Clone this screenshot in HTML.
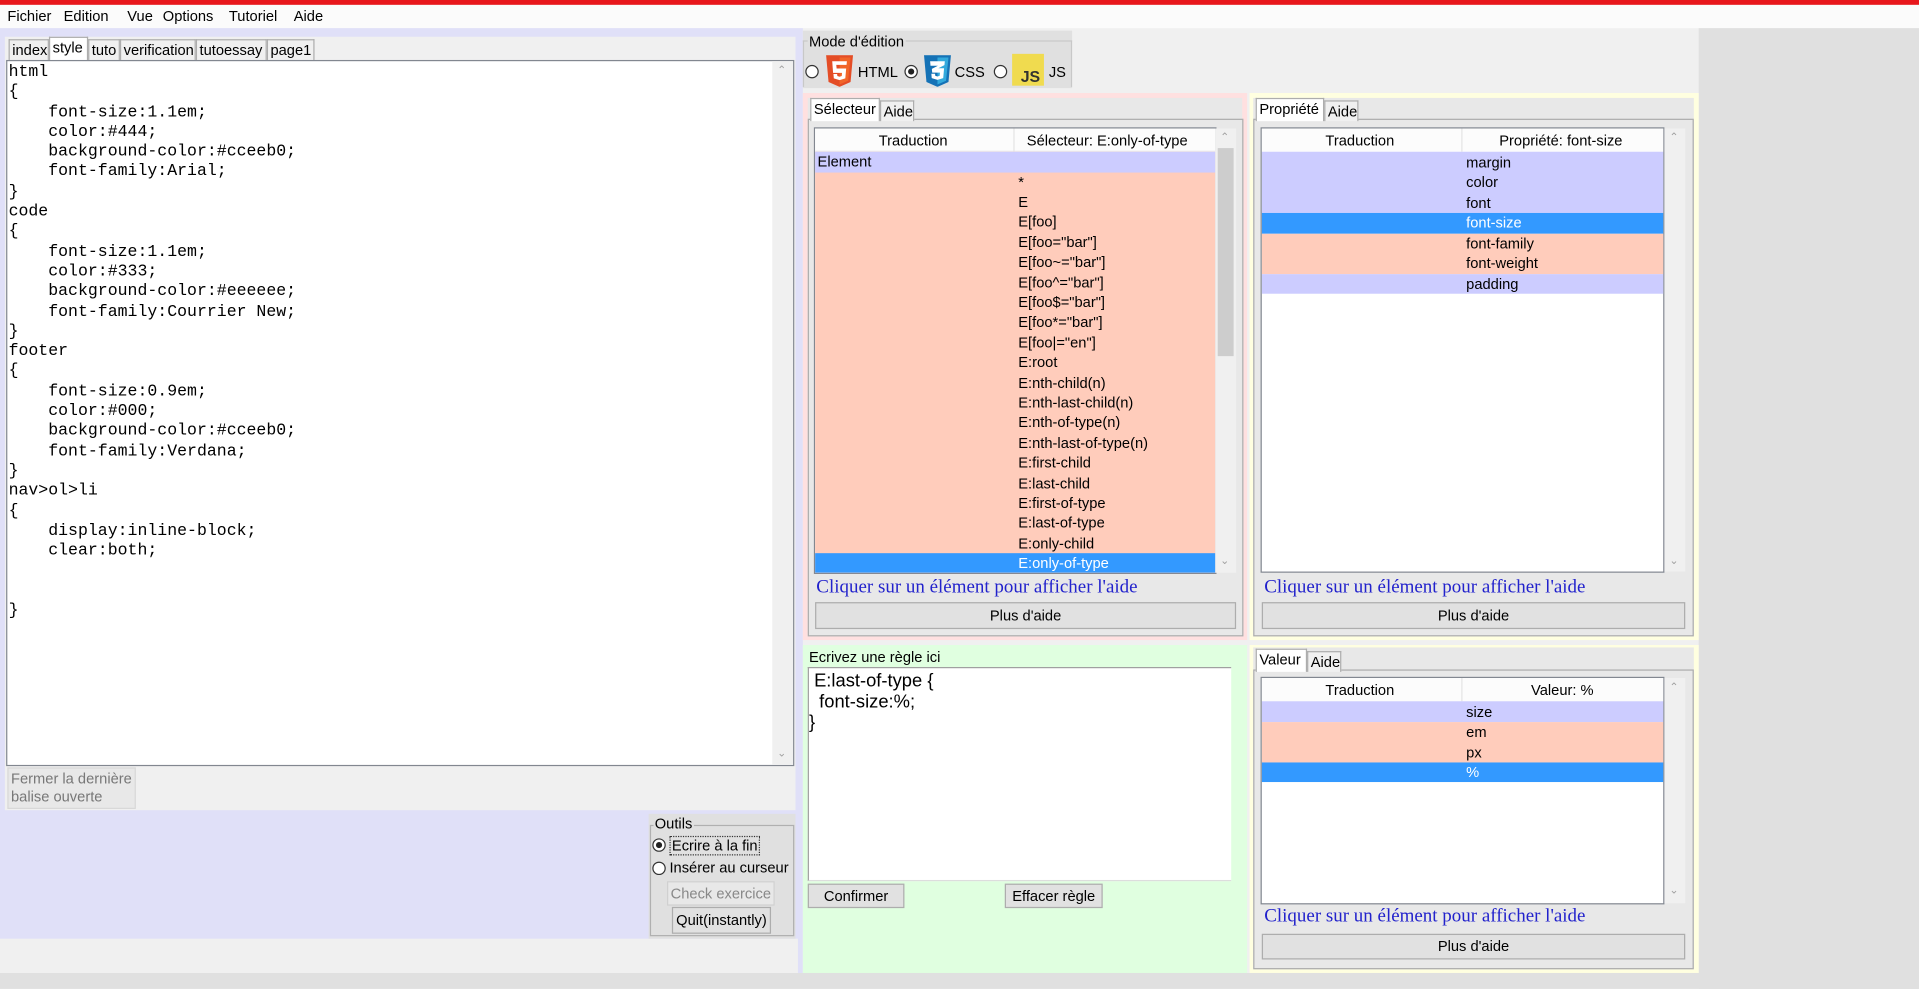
<!DOCTYPE html>
<html><head><meta charset="utf-8"><style>
*{box-sizing:border-box;margin:0;padding:0}
body{width:1919px;height:989px;overflow:hidden;background:#f0f0f0;font-family:"Liberation Sans",sans-serif}
#r{position:absolute;left:0;top:0;width:1568px;height:808px;transform:scale(1.22385);transform-origin:0 0;font-size:12px;color:#000;background:#f0f0f0}
.a{position:absolute}
.t{position:absolute;white-space:nowrap}
.tab{position:absolute;height:18px;border:1px solid #adadad;border-bottom:none;background:#f0f0f0;padding:1px 2px;font-size:12px}
.tab.on{background:#fff;height:20px;top:-2px}
.btn{position:absolute;border:1px solid #adadad;background:#e1e1e1;text-align:center;font-size:12px}
.tbl{position:absolute;background:#fff;border:1px solid #828790}
.row{position:absolute;left:0;height:16.5px;line-height:16px;font-size:12px}
.code{font-family:"Liberation Mono",monospace;font-size:13.5px;line-height:16.3px;white-space:pre;color:#000}
.help{position:absolute;font-family:"Liberation Serif",serif;font-size:15.5px;color:#2222cc;white-space:nowrap}
.radio{position:absolute;width:11px;height:11px;border:1px solid #333;border-radius:50%;background:#fff}
.radio.on::after{content:"";position:absolute;left:2px;top:2px;width:5px;height:5px;border-radius:50%;background:#222}
.sb{position:absolute;background:#f0f0f0}
.ar{position:absolute;color:#a0a0a0;font-size:9px}
</style></head><body><div id="r">
<div class="a" style="left:0;top:0;width:1568px;height:4px;background:#e8171c"></div>
<div class="a" style="left:0;top:4px;width:1568px;height:19px;background:#fbfbfb"></div>
<div class="t" style="left:6px;top:6px">Fichier</div>
<div class="t" style="left:52px;top:6px">Edition</div>
<div class="t" style="left:104px;top:6px">Vue</div>
<div class="t" style="left:133px;top:6px">Options</div>
<div class="t" style="left:187px;top:6px">Tutoriel</div>
<div class="t" style="left:240px;top:6px">Aide</div>
<div class="a" style="left:1388px;top:23px;width:180px;height:785px;background:#e0e0e0"></div>
<div class="a" style="left:0;top:795px;width:1568px;height:13px;background:#e0e0e0"></div>

<!-- left panel -->
<div class="a" style="left:0;top:23px;width:652px;height:744px;background:#e0e0f8"></div>
<div class="a" style="left:4px;top:30px;width:646px;height:632px;background:#f0f0f0"></div>
<div class="a" style="left:0;top:32px;height:20px">
<div class="tab" style="left:7px;width:33px">index</div>
<div class="tab on" style="left:40px;width:32px">style</div>
<div class="tab" style="left:72px;width:26px">tuto</div>
<div class="tab" style="left:98px;width:62px">verification</div>
<div class="tab" style="left:160px;width:58px">tutoessay</div>
<div class="tab" style="left:218px;width:39px">page1</div>
</div>
<div class="a" style="left:5px;top:49px;width:644px;height:577px;background:#fff;border:1px solid #828790"></div>
<div class="sb" style="left:631px;top:50px;width:17px;height:575px"></div>
<div class="ar" style="left:635px;top:52px">&#8963;</div>
<div class="ar" style="left:635px;top:610px">&#8964;</div>
<div class="a code" style="left:7px;top:52px">html
{
    font-size:1.1em;
    color:#444;
    background-color:#cceeb0;
    font-family:Arial;
}
code
{
    font-size:1.1em;
    color:#333;
    background-color:#eeeeee;
    font-family:Courrier New;
}
footer
{
    font-size:0.9em;
    color:#000;
    background-color:#cceeb0;
    font-family:Verdana;
}
nav&gt;ol&gt;li
{
    display:inline-block;
    clear:both;


}</div>
<div class="a" style="left:6px;top:627px;width:105px;height:34px;background:#e8e8e8;border:1px solid #d8d8d8;color:#777;font-size:12px;line-height:15px;padding:1px 2px">Fermer la dernière<br>balise ouverte</div>

<!-- outils -->
<div class="a" style="left:530px;top:665px;width:120px;height:102px;background:#e0e0e0"></div>
<div class="a" style="left:531px;top:674px;width:118px;height:91px;border:1px solid #b0b0b0"></div>
<div class="t" style="left:534px;top:666px;background:#e0e0e0;padding:0 1px">Outils</div>
<div class="radio on" style="left:533px;top:685px"></div>
<div class="t" style="left:547px;top:683px;border:1px dotted #333;padding:0 1px">Ecrire à la fin</div>
<div class="radio" style="left:533px;top:704px"></div>
<div class="t" style="left:547px;top:702px">Insérer au curseur</div>
<div class="btn" style="left:545px;top:720px;width:88px;height:20px;color:#888;background:#e8e8e8;border-color:#d0d0d0;line-height:18px">Check exercice</div>
<div class="btn" style="left:549px;top:741px;width:81px;height:22px;line-height:20px">Quit(instantly)</div>

<!-- mode d'edition -->
<div class="a" style="left:652px;top:23px;width:4px;height:772px;background:#e0e0f8"></div>
<div class="a" style="left:656px;top:25px;width:220px;height:47px;background:#e0e0e0"></div>
<div class="a" style="left:656px;top:33px;width:220px;height:38px;border:1px solid #c8c8c8;border-bottom:none"></div>
<div class="t" style="left:660px;top:27px;background:#e0e0e0;padding:0 1px">Mode d'édition</div>
<div class="radio" style="left:658px;top:53px"></div>
<svg class="a" style="left:674px;top:45px" width="24" height="26" viewBox="0 0 24 26"><path d="M1 0h22l-2 22-9 4-9-4z" fill="#e44d26"/><path d="M12 2v22l7-3 2-19z" fill="#f16529"/><path d="M6 5h12l-.3 3H9.3l.3 3h7.8l-.7 8-4.7 1.5-4.7-1.5-.3-3.5h3l.2 1.6 1.8.6 1.8-.6.2-2.6H6.7z" fill="#fff"/></svg>
<div class="t" style="left:701px;top:52px">HTML</div>
<div class="radio on" style="left:739px;top:53px"></div>
<svg class="a" style="left:754px;top:45px" width="24" height="26" viewBox="0 0 24 26"><path d="M1 0h22l-2 22-9 4-9-4z" fill="#1572b6"/><path d="M12 2v22l7-3 2-19z" fill="#33a9dc"/><path d="M6 5h12l-.3 3.2-5 2.6h4.7l-.7 8-4.7 1.5-4.7-1.5-.3-3.5h3l.2 1.6 1.8.6 1.8-.6.2-2.6H7.7l-.3-3 5-2.6H6.3z" fill="#fff"/></svg>
<div class="t" style="left:780px;top:52px">CSS</div>
<div class="radio" style="left:812px;top:53px"></div>
<div class="a" style="left:827px;top:44px;width:26px;height:26px;background:#f0db4f"></div>
<div class="t" style="left:834px;top:55px;font-weight:bold;font-size:13px;color:#323330">JS</div>
<div class="t" style="left:857px;top:52px">JS</div>

<!-- selecteur panel -->
<div class="a" style="left:656px;top:76px;width:363px;height:447px;background:#ffe0e0"></div>
<div class="a" style="left:660px;top:80px;width:355px;height:440px;background:#e8e8e8"></div>
<div class="a" style="left:660px;top:97px;width:356px;height:423px;border:1px solid #adadad;background:#e8e8e8"></div>
<div class="a" style="left:660px;top:80px;height:18px">
<div class="tab on" style="left:2px;top:0;width:57px;height:19px">Sélecteur</div>
<div class="tab" style="left:59px;top:2px;width:28px;height:17px">Aide</div>
</div>
<div class="tbl" style="left:665px;top:104px;width:329px;height:365px;overflow:hidden">
<div class="row" style="top:0;width:329px;height:19px;background:#fcfcfc;border-bottom:1px solid #eee"></div>
<div class="t" style="left:52px;top:3px">Traduction</div>
<div class="a" style="left:162px;top:0;width:1px;height:19px;background:#e5e5e5"></div>
<div class="t" style="left:173px;top:3px">Sélecteur: E:only-of-type</div>
<div class="a" style="left:0;top:19px;width:329px;height:345px;background:#ffccbb"></div>
<div class="row" style="top:19px;width:329px;background:#ccccff;padding-left:2px">Element</div>
<div class="row" style="top:346.5px;width:329px;background:#3399ff"></div>
<div class="a" style="left:166px;top:35.5px;line-height:16.4px;font-size:12px;white-space:pre">*
E
E[foo]
E[foo="bar"]
E[foo~="bar"]
E[foo^="bar"]
E[foo$="bar"]
E[foo*="bar"]
E[foo|="en"]
E:root
E:nth-child(n)
E:nth-last-child(n)
E:nth-of-type(n)
E:nth-last-of-type(n)
E:first-child
E:last-child
E:first-of-type
E:last-of-type
E:only-child
<span style="color:#fff">E:only-of-type</span></div>
</div>
<div class="sb" style="left:993px;top:105px;width:17px;height:363px"></div>
<div class="a" style="left:995px;top:121px;width:13px;height:170px;background:#cdcdcd"></div>
<div class="ar" style="left:997px;top:107px">&#8963;</div>
<div class="ar" style="left:997px;top:453px">&#8964;</div>
<div class="help" style="left:667px;top:471px">Cliquer sur un élément pour afficher l'aide</div>
<div class="btn" style="left:666px;top:492px;width:344px;height:22px;line-height:20px">Plus d'aide</div>

<!-- regle panel -->
<div class="a" style="left:656px;top:527px;width:363px;height:268px;background:#e0ffe0"></div>
<div class="t" style="left:661px;top:530px">Ecrivez une règle ici</div>
<div class="a" style="left:660px;top:545px;width:346px;height:175px;background:#fff;border:1px solid #a0a0a0;border-right:none;border-bottom-color:#ddd"></div>
<div class="a" style="left:661px;top:548px;font-size:15px;line-height:17px;white-space:pre"> E:last-of-type {
  font-size:%;
}</div>
<div class="btn" style="left:660px;top:722px;width:79px;height:20px;line-height:18px">Confirmer</div>
<div class="btn" style="left:821px;top:722px;width:80px;height:20px;line-height:18px">Effacer règle</div>

<!-- propriete panel -->
<div class="a" style="left:1021px;top:76px;width:367px;height:447px;background:#ffffe0"></div>
<div class="a" style="left:1024px;top:80px;width:360px;height:440px;background:#e8e8e8"></div>
<div class="a" style="left:1024px;top:97px;width:360px;height:423px;border:1px solid #adadad;background:#e8e8e8"></div>
<div class="a" style="left:1024px;top:80px;height:18px">
<div class="tab on" style="left:2px;top:0;width:56px;height:19px">Propriété</div>
<div class="tab" style="left:58px;top:2px;width:28px;height:17px">Aide</div>
</div>
<div class="tbl" style="left:1030px;top:104px;width:330px;height:364px;overflow:hidden">
<div class="row" style="top:0;width:330px;height:19px;background:#fcfcfc"></div>
<div class="t" style="left:52px;top:3px">Traduction</div>
<div class="a" style="left:163px;top:0;width:1px;height:19px;background:#e5e5e5"></div>
<div class="t" style="left:194px;top:3px">Propriété: font-size</div>
<div class="row" style="top:19px;width:330px;height:50px;background:#ccccff"></div>
<div class="row" style="top:69px;width:330px;background:#3399ff"></div>
<div class="row" style="top:85.5px;width:330px;height:33px;background:#ffccbb"></div>
<div class="row" style="top:118.5px;width:330px;background:#ccccff"></div>
<div class="a" style="left:167px;top:19.5px;line-height:16.6px;font-size:12px;white-space:pre">margin
color
font
<span style="color:#fff">font-size</span>
font-family
font-weight
padding</div>
</div>
<div class="sb" style="left:1360px;top:105px;width:17px;height:362px"></div>
<div class="ar" style="left:1364px;top:107px">&#8963;</div>
<div class="ar" style="left:1364px;top:453px">&#8964;</div>
<div class="help" style="left:1033px;top:471px">Cliquer sur un élément pour afficher l'aide</div>
<div class="btn" style="left:1031px;top:492px;width:346px;height:22px;line-height:20px">Plus d'aide</div>

<!-- valeur panel -->
<div class="a" style="left:1021px;top:527px;width:367px;height:268px;background:#ffffe0"></div>
<div class="a" style="left:1024px;top:529px;width:360px;height:263px;background:#e8e8e8"></div>
<div class="a" style="left:1024px;top:547px;width:360px;height:245px;border:1px solid #adadad;background:#e8e8e8"></div>
<div class="a" style="left:1024px;top:530px;height:18px">
<div class="tab on" style="left:2px;top:0;width:42px;height:19px">Valeur</div>
<div class="tab" style="left:44px;top:2px;width:28px;height:17px">Aide</div>
</div>
<div class="tbl" style="left:1030px;top:553px;width:330px;height:186px;overflow:hidden">
<div class="row" style="top:0;width:330px;height:19px;background:#fcfcfc"></div>
<div class="t" style="left:52px;top:3px">Traduction</div>
<div class="a" style="left:163px;top:0;width:1px;height:19px;background:#e5e5e5"></div>
<div class="t" style="left:220px;top:3px">Valeur: %</div>
<div class="row" style="top:19px;width:330px;background:#ccccff"></div>
<div class="row" style="top:35.5px;width:330px;height:33px;background:#ffccbb"></div>
<div class="row" style="top:68.5px;width:330px;background:#3399ff"></div>
<div class="a" style="left:167px;top:19.5px;line-height:16.6px;font-size:12px;white-space:pre">size
em
px
<span style="color:#fff">%</span></div>
</div>
<div class="sb" style="left:1360px;top:554px;width:17px;height:184px"></div>
<div class="ar" style="left:1364px;top:556px">&#8963;</div>
<div class="ar" style="left:1364px;top:722px">&#8964;</div>
<div class="help" style="left:1033px;top:740px">Cliquer sur un élément pour afficher l'aide</div>
<div class="btn" style="left:1031px;top:763px;width:346px;height:21px;line-height:19px">Plus d'aide</div>
</div></body></html>
